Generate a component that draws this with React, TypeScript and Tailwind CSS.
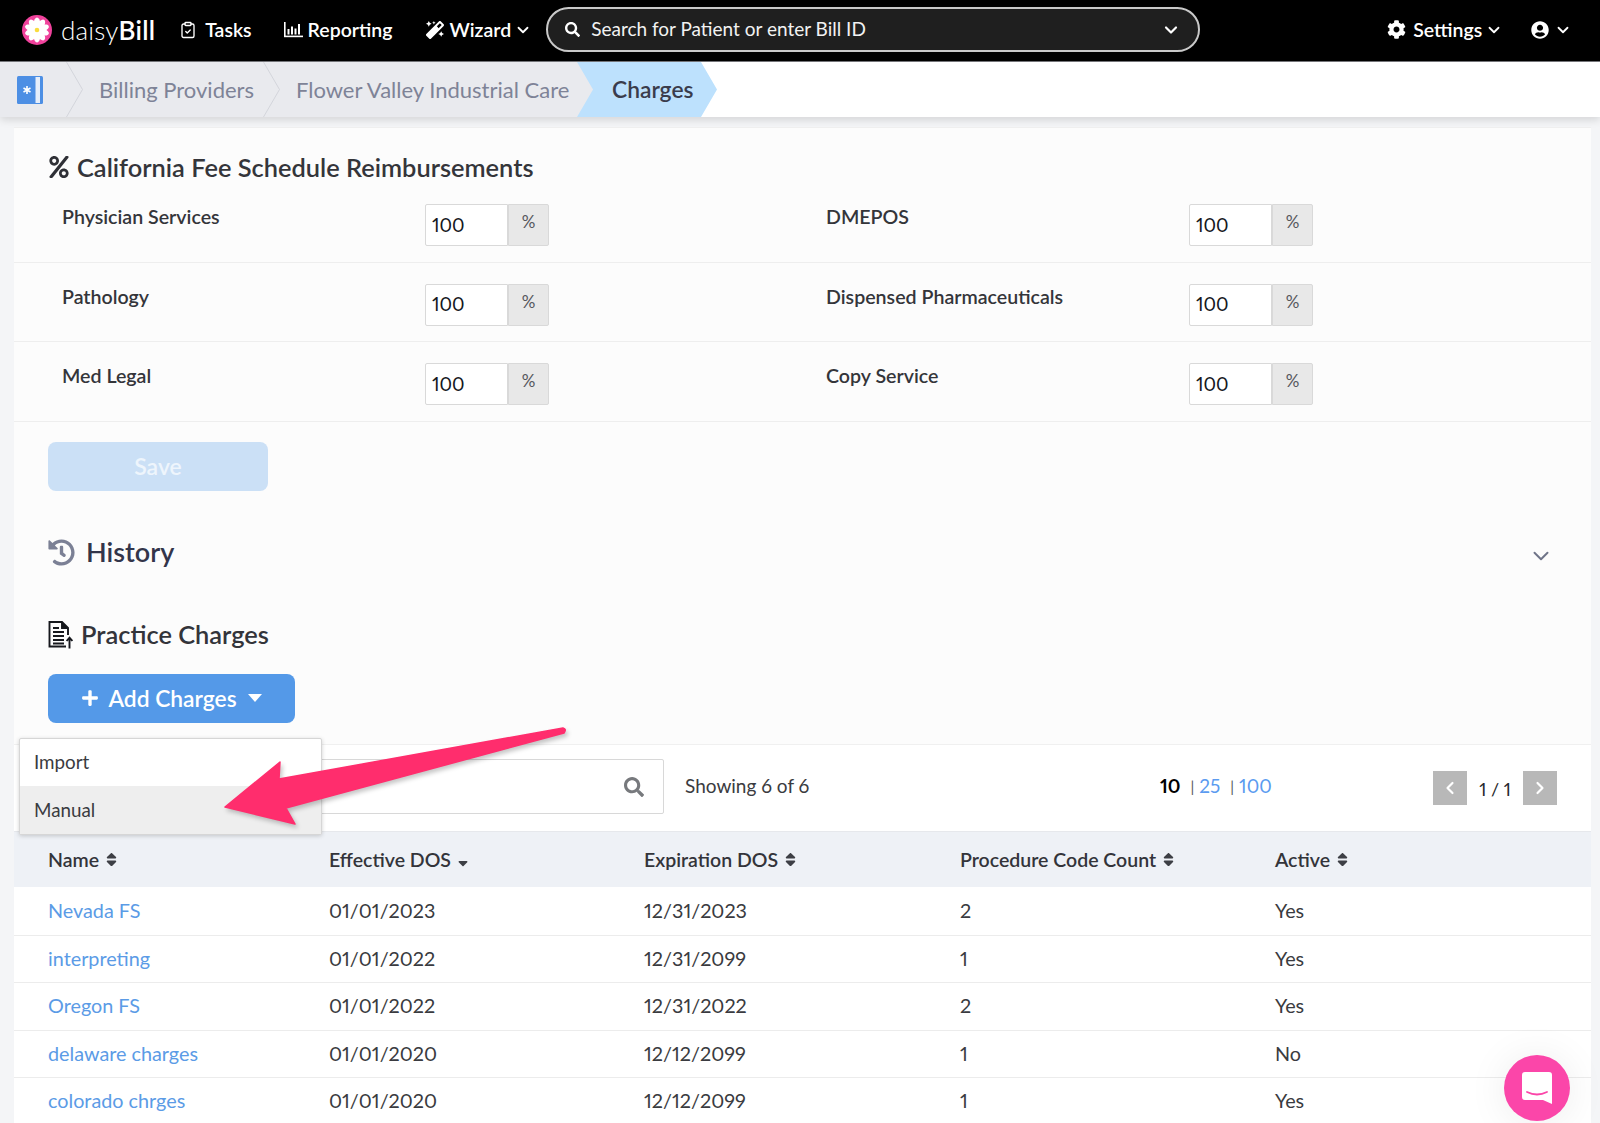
import { ChevronDown, ChevronLeft, ChevronRight, ClipboardCheck } from "lucide-react";
import {
  FaCog,
  FaHistory,
  FaMagic,
  FaPercent,
  FaPlus,
  FaSearch,
  FaSort,
  FaSortDown,
  FaUserCircle,
} from "react-icons/fa";

const FEE_ROWS = [
  ["Physician Services", "DMEPOS"],
  ["Pathology", "Dispensed Pharmaceuticals"],
  ["Med Legal", "Copy Service"],
];

const CHARGES = [
  ["Nevada FS", "01/01/2023", "12/31/2023", "2", "Yes"],
  ["interpreting", "01/01/2022", "12/31/2099", "1", "Yes"],
  ["Oregon FS", "01/01/2022", "12/31/2022", "2", "Yes"],
  ["delaware charges", "01/01/2020", "12/12/2099", "1", "No"],
  ["colorado chrges", "01/01/2020", "12/12/2099", "1", "Yes"],
];

function Logo() {
  const petals = [0, 36, 72, 108, 144, 180, 216, 252, 288, 324];
  return (
    <svg width="30" height="30" viewBox="0 0 30 30">
      <circle cx="15" cy="15" r="15" fill="#f0429c" />
      {petals.map((a) => (
        <ellipse key={a} cx="15" cy="8.2" rx="3.2" ry="5.6" fill="#ffffff" transform={`rotate(${a} 15 15)`} />
      ))}
      <circle cx="15" cy="15" r="2.3" fill="#f9dc3e" />
    </svg>
  );
}

function ReportingIcon() {
  return (
    <svg width="19" height="16" viewBox="0 0 19 16" fill="#ffffff">
      <rect x="0" y="0" width="1.6" height="15" />
      <rect x="0" y="13.6" width="19" height="1.6" />
      <rect x="3.5" y="7" width="2" height="5.5" />
      <rect x="7" y="4.5" width="2" height="8" />
      <rect x="10.5" y="6.5" width="2" height="6" />
      <rect x="14" y="2" width="2" height="10.5" />
    </svg>
  );
}

function BookIcon() {
  return (
    <svg width="26" height="28" viewBox="0 0 26 28">
      <rect x="0" y="0" width="26" height="28" rx="1.5" fill="#4d8fe4" />
      <rect x="18.5" y="1" width="4.5" height="26" fill="#e6eefa" />
      <path d="M10 10v8M6.5 12l7 4M13.5 12l-7 4" stroke="#ffffff" strokeWidth="1.6" />
    </svg>
  );
}

function CrumbDivider() {
  return (
    <svg width="17" height="55" viewBox="0 0 17 55" className="shrink-0">
      <path d="M0.5 0L16.5 27.5L0.5 55" fill="none" stroke="#d3d5db" strokeWidth="1" />
    </svg>
  );
}

function ChargesIcon() {
  return (
    <svg width="25" height="28" viewBox="0 0 25 28" fill="none" stroke="#16181d" strokeWidth="1.9">
      <path d="M18 25.5H1.5V1H14l6 6v7" />
      <path d="M14 1v6h6" fill="#16181d" />
      <path d="M5 7h6M5 11h11M5 15h11M5 19h11M5 22.5h11" />
      <path d="M21.5 27.5V17M18.6 20l2.9-3.4 2.9 3.4" />
    </svg>
  );
}

function SortHead({ label, sorted }: { label: string; sorted?: boolean }) {
  return (
    <span className="flex items-center gap-[4px] text-[19.5px] font-semibold text-[#33343a]">
      {label}
      {sorted ? (
        <FaSortDown className="mt-[1px] text-[16px] text-[#3d3f45]" />
      ) : (
        <FaSort className="text-[17px] text-[#3d3f45]" />
      )}
    </span>
  );
}

function PercentField() {
  return (
    <div className="flex h-[42px] w-[124px]">
      <div className="flex h-full w-[83px] items-center rounded-l-[2px] border border-[#d9d9d9] bg-white pl-[6px] text-[19px] text-[#16181d]">
        100
      </div>
      <div className="h-full flex-1 rounded-r-[2px] border border-[#d9d9d9] bg-[#e8e8e8] pt-[4px] text-center text-[17px] text-[#55575c]">
        %
      </div>
    </div>
  );
}

export default function App() {
  return (
    <div className="relative h-[1123px] w-[1600px] overflow-hidden bg-[#f4f5f7] font-['Lato',sans-serif] text-[#2f3036] proportional-nums">
      {/* Top nav */}
      <header className="flex h-[62px] items-center border-b border-[#77787c] bg-black pb-[2px] pl-[22px] text-white">
        <Logo />
        <span className="ml-[9px] text-[26px] leading-none tracking-[0.2px] font-light">
          daisy<span className="font-semibold">Bill</span>
        </span>
        <ClipboardCheck className="ml-[24px] h-[18px] w-[18px]" strokeWidth={1.8} />
        <span className="ml-[8px] text-[19.5px] font-semibold">Tasks</span>
        <span className="ml-[32px]">
          <ReportingIcon />
        </span>
        <span className="ml-[5px] text-[19.5px] font-semibold">Reporting</span>
        <FaMagic className="ml-[33px] text-[18px]" />
        <span className="ml-[6px] text-[19.5px] font-semibold">Wizard</span>
        <ChevronDown className="ml-[3px] h-[18px] w-[18px]" strokeWidth={2.4} />
        <div className="ml-[14px] flex h-[45px] w-[654px] items-center rounded-full border-2 border-[#c9c9c9] bg-[#1f1f1f] pl-[17px] pr-[17px]">
          <FaSearch className="text-[15px]" />
          <span className="ml-[11px] flex-1 text-[19px] text-[#f2f2f2]">Search for Patient or enter Bill ID</span>
          <ChevronDown className="h-[20px] w-[20px]" strokeWidth={2.6} />
        </div>
        <FaCog className="ml-[187px] text-[19px]" />
        <span className="ml-[7px] text-[19.5px] font-semibold">Settings</span>
        <ChevronDown className="ml-[3px] h-[18px] w-[18px]" strokeWidth={2.4} />
        <FaUserCircle className="ml-[28px] text-[18px]" />
        <ChevronDown className="ml-[5px] h-[18px] w-[18px]" strokeWidth={2.4} />
      </header>

      {/* Breadcrumb */}
      <nav className="relative z-10 flex h-[55px] bg-white shadow-[0_3px_8px_rgba(0,0,0,0.13)]">
        <div className="flex h-full w-[594px] items-center bg-[#e9eaee] text-[22px] text-[#7e8397] [clip-path:polygon(0_0,578px_0,594px_50%,578px_100%,0_100%)]">
          <div className="flex w-[66px] shrink-0 justify-start pl-[17px]">
            <BookIcon />
          </div>
          <CrumbDivider />
          <span className="ml-[16px] w-[164px]">Billing Providers</span>
          <CrumbDivider />
          <span className="ml-[16px]">Flower Valley Industrial Care</span>
        </div>
        <div className="-ml-[17px] flex h-full w-[140px] items-center bg-[#bde1fd] pl-[35px] text-[22.8px] font-semibold text-[#3a3c4c] [clip-path:polygon(0_0,124px_0,140px_50%,124px_100%,0_100%,16px_50%)]">
          Charges
        </div>
      </nav>

      <main className="ml-[14px] mt-[10px] w-[1577px]">
        {/* Fee schedule + charges heading */}
        <section className="border-b border-t border-[#f0f0f0] bg-[#fcfcfc] pb-[21.5px]">
          <h2 className="mt-[23px] flex h-[32px] items-center pl-[34px] text-[25.4px] font-semibold text-[#34353a]">
            <FaPercent className="mr-[7px] text-[22px] text-[#2f3036]" />
            California Fee Schedule Reimbursements
          </h2>
          {FEE_ROWS.map((row) => (
            <div key={row[0]} className="grid grid-cols-[764px_1fr] border-b border-[#eeeeee] pb-[15.5px] pl-[48px] pt-[21px]">
              {row.map((label) => (
                <div key={label} className="flex">
                  <span className="w-[363px] text-[19.6px] leading-[26px] font-semibold text-[#34353a]">{label}</span>
                  <PercentField />
                </div>
              ))}
            </div>
          ))}

          <div className="ml-[34px] mt-[20px] flex h-[49px] w-[220px] items-center justify-center rounded-[8px] bg-[#cbe0f6] text-[23px] font-semibold text-[#eef5fc]">
            Save
          </div>

          <div className="mt-[44px] flex h-[36px] items-center pl-[34px] pr-[37px]">
            <FaHistory className="text-[27px] text-[#7b8095]" />
            <span className="ml-[11px] flex-1 text-[27px] font-semibold text-[#33354a]">History</span>
            <ChevronDown className="mt-[6px] h-[26px] w-[26px] text-[#6f7488]" strokeWidth={1.8} />
          </div>

          <div className="mt-[48px] flex h-[32px] items-center pl-[34px] text-[25.4px] font-semibold text-[#33343a]">
            <ChargesIcon />
            <span className="ml-[8px]">Practice Charges</span>
          </div>

          <div className="ml-[34px] mt-[23px] flex h-[49px] w-[247px] items-center justify-center rounded-[8px] bg-[#5499e8] text-[22.8px] font-semibold text-white">
            <FaPlus className="mr-[9px] text-[18px]" />
            Add Charges
            <svg width="14" height="8" viewBox="0 0 14 8" className="ml-[11px]">
              <path d="M0 0H14L7 8Z" fill="#ffffff" />
            </svg>
          </div>
        </section>

        {/* Table toolbar */}
        <div className="flex h-[86px] bg-white pl-[34px]">
          <div className="mt-[14px] flex h-[55px] w-[616px] items-center justify-end rounded-[2px] border border-[#d8d8d8] pr-[19px]">
            <FaSearch className="text-[20px] text-[#77797d]" />
          </div>
          <div className="ml-[21px] mt-[29px] w-[475px] text-[19px] leading-[24px] text-[#3a3b40]">Showing 6 of 6</div>
          <div className="mt-[29px] flex w-[273px] items-center self-start text-[19px] leading-[24px]">
            <span className="font-bold text-black">10</span>
            <span className="ml-[10px] text-[15px] text-[#55575c]">|</span>
            <span className="ml-[5px] text-[#5b9bf0]">25</span>
            <span className="ml-[10px] text-[15px] text-[#55575c]">|</span>
            <span className="ml-[5px] text-[#5b9bf0]">100</span>
          </div>
          <div className="mt-[26px] flex h-[34px] items-center self-start">
            <div className="flex h-[34px] w-[34px] items-center justify-center bg-[#b8b8b8] text-white">
              <ChevronLeft className="h-[20px] w-[20px]" strokeWidth={2.6} />
            </div>
            <span className="w-[56px] pt-[3px] text-center text-[18px] text-[#26272b]">1 / 1</span>
            <div className="flex h-[34px] w-[34px] items-center justify-center bg-[#b8b8b8] text-white">
              <ChevronRight className="h-[20px] w-[20px]" strokeWidth={2.6} />
            </div>
          </div>
        </div>

        {/* Charges table */}
        <div className="grid h-[56px] grid-cols-[281px_315px_316px_315px_1fr] items-center border-t border-[#e6e8ec] bg-[#eef1f6] pl-[34px]">
          <SortHead label="Name" />
          <SortHead label="Effective DOS" sorted />
          <SortHead label="Expiration DOS" />
          <SortHead label="Procedure Code Count" />
          <SortHead label="Active" />
        </div>
        {CHARGES.map((row, i) => (
          <div
            key={row[0]}
            className={`grid h-[47.5px] grid-cols-[281px_315px_316px_315px_1fr] items-center bg-white pl-[34px] text-[19.8px] text-[#3a3b40] ${
              i > 0 ? "border-t border-[#ececec]" : ""
            }`}
          >
            <span className="text-[#5b9be6]">{row[0]}</span>
            <span>{row[1]}</span>
            <span>{row[2]}</span>
            <span>{row[3]}</span>
            <span>{row[4]}</span>
          </div>
        ))}
      </main>

      {/* Add Charges dropdown */}
      <div className="absolute left-[19px] top-[738px] w-[303px] overflow-hidden rounded-[2px] border border-[#d6d6d6] bg-white text-[18.8px] text-[#3a3b40] shadow-[0_1px_4px_rgba(0,0,0,0.18)]">
        <div className="flex h-[47px] items-center pl-[14px]">Import</div>
        <div className="flex h-[48px] items-center bg-[#eeeeee] pl-[14px]">Manual</div>
      </div>

      {/* Annotation arrow */}
      <svg
        width="380"
        height="125"
        viewBox="210 715 380 125"
        className="absolute left-[210px] top-[715px] drop-shadow-[2px_3px_2px_rgba(0,0,0,0.22)]"
      >
        <path
          d="M563 728 L279 779 L280 762 L225 807 L295 824 L286 808 L564 733 Q567 729 563 728 Z"
          fill="#ff2d6d"
          stroke="#ff2d6d"
          strokeWidth="1.5"
          strokeLinejoin="round"
        />
      </svg>

      {/* Chat launcher */}
      <div className="absolute left-[1504px] top-[1055px] flex h-[66px] w-[66px] items-center justify-center rounded-full bg-[#fb46a9] shadow-[0_2px_40px_rgba(0,0,0,0.08)]">
        <svg width="30" height="32" viewBox="0 0 30 32">
          <path d="M3 0H27a3 3 0 0 1 3 3V32L21 28H3a3 3 0 0 1-3-3V3a3 3 0 0 1 3-3Z" fill="#ffffff" />
          <path d="M5 20Q15 25 25 20" fill="none" stroke="#fb46a9" strokeWidth="1.8" strokeLinecap="round" />
        </svg>
      </div>
    </div>
  );
}
